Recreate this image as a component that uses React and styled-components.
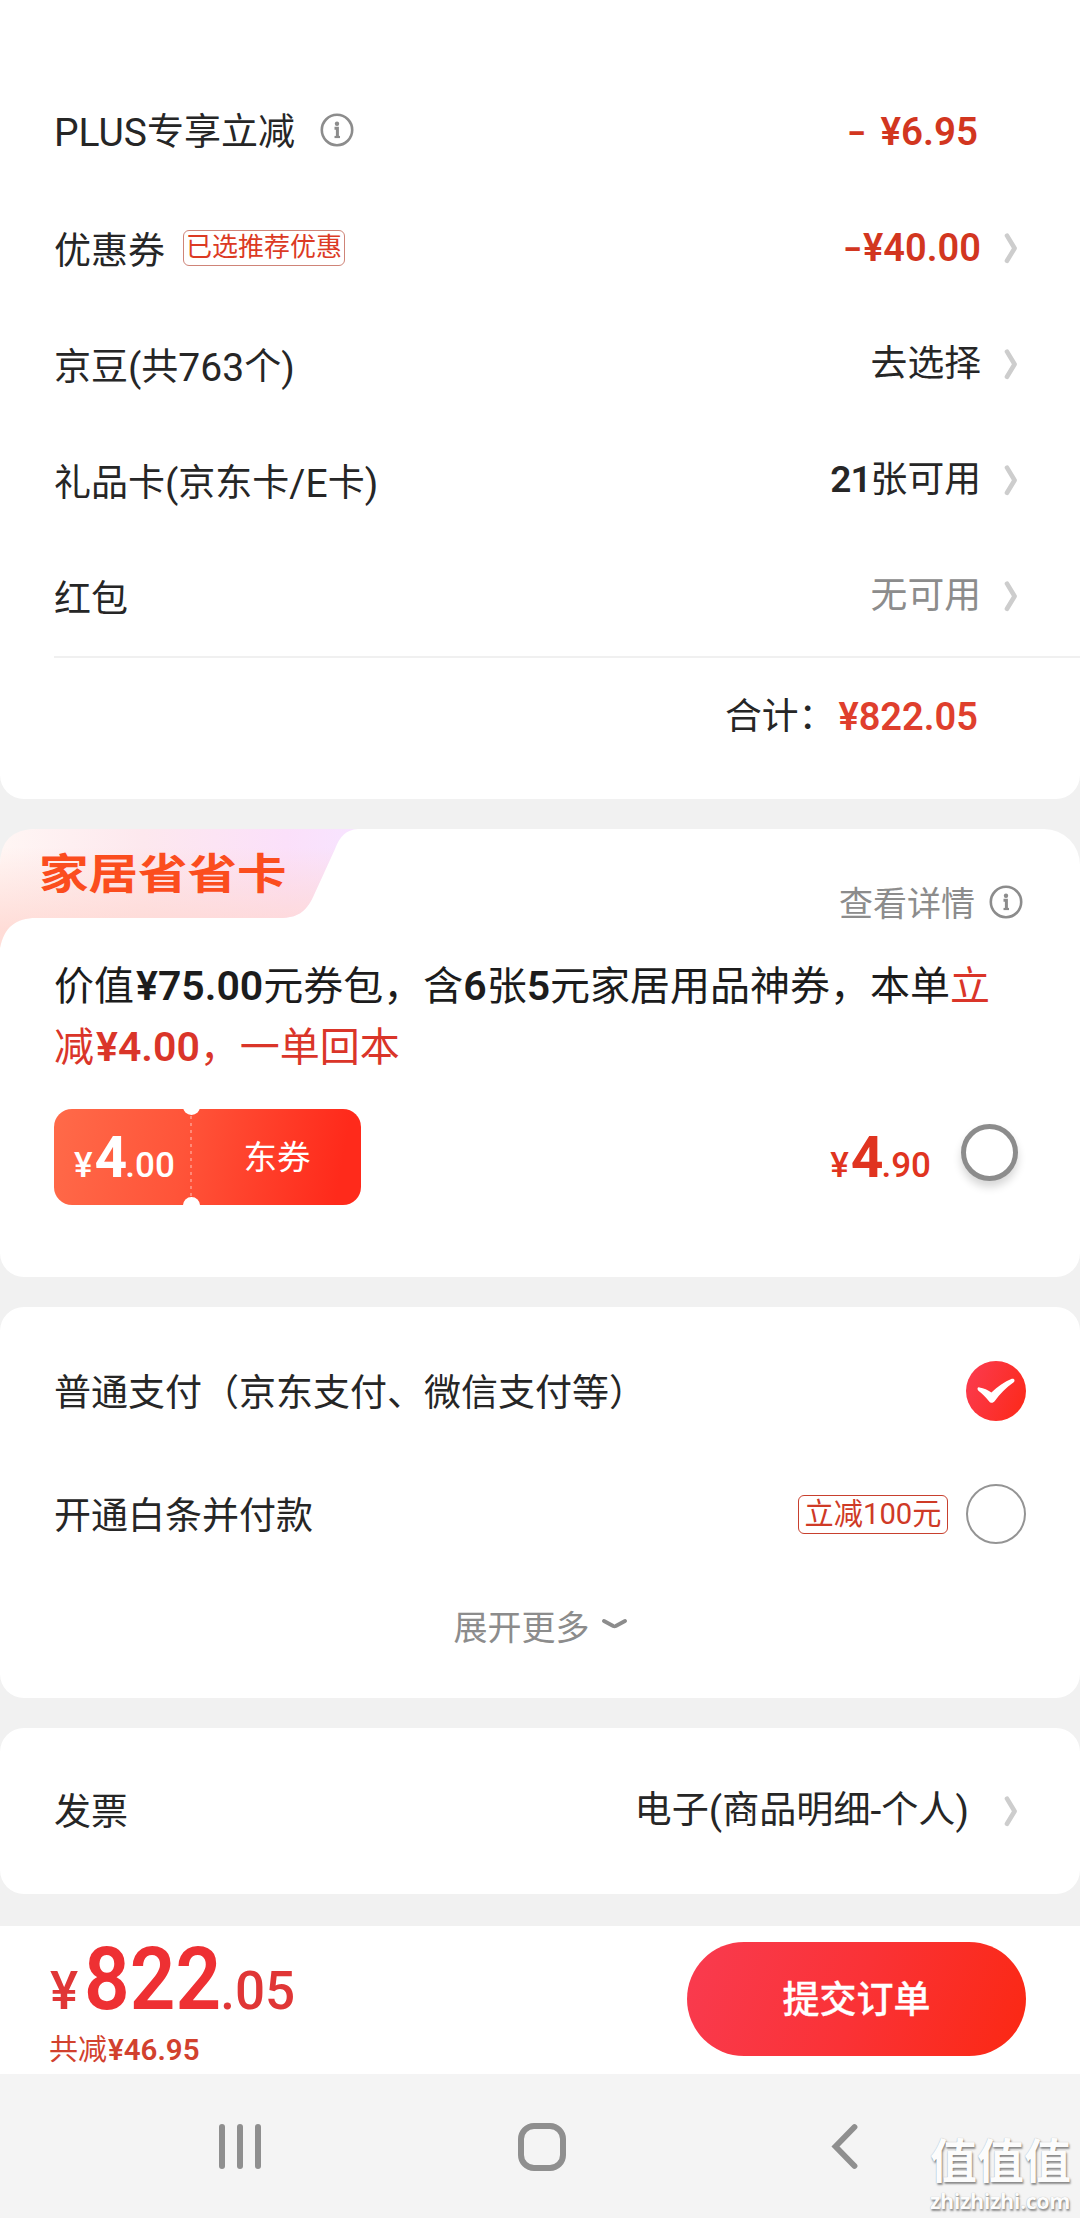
import React from "react";
import styled, { createGlobalStyle } from "styled-components";

const GlobalStyle = createGlobalStyle`
  * {
    box-sizing: border-box;
  }

  body {
    margin: 0;
    background: #f1f1f1;
    color: #262626;
    font-family: Roboto, "Noto Sans CJK SC", sans-serif;
    font-size: 37px;
  }
`;

const Page = styled.div`
  position: relative;
  width: 1080px;
  height: 2218px;
  display: flex;
  flex-direction: column;
  overflow: hidden;
  background: #f1f1f1;
`;

const Card = styled.section`
  height: ${(p) => p.$height}px;
  margin-bottom: ${(p) => p.$gap || 30}px;
  padding: ${(p) => p.$padding || "0"};
  border-radius: ${(p) => p.$radius || "24px"};
  background: #fff;
`;

const Row = styled.div`
  height: ${(p) => p.$height || 116}px;
  padding: 0 54px;
  display: flex;
  align-items: center;
  justify-content: space-between;
`;

const Label = styled.div`
  display: flex;
  align-items: center;
  padding-top: ${(p) => p.$shift || 0}px;
  line-height: 50px;
  white-space: nowrap;

  svg {
    margin: -5px 0 0 25px;
  }
`;

const Value = styled.div`
  display: flex;
  align-items: center;
  padding-right: ${(p) => p.$inset || 8}px;
  font-size: ${(p) => p.$size || 36.8}px;
  line-height: 50px;
  white-space: pre;
  color: ${(p) => (p.$muted ? "#8c8c8c" : "inherit")};

  svg {
    margin-left: ${(p) => p.$arrowGap || 23}px;
  }
`;

const Latin = styled.span`
  font-size: 39px;
`;

const Digits = styled.span`
  margin-left: ${(p) => p.$before || 0}px;
  font-weight: 600;
  font-size: ${(p) => (p.$size ? `${p.$size}px` : "inherit")};
  letter-spacing: ${(p) => p.$tracking || 0}px;
  color: ${(p) => p.$color || "inherit"};
`;

const Minus = styled.span`
  display: inline-block;
  margin-right: ${(p) => p.$after}px;
  color: #d2361f;
  font-weight: 600;
  transform: scaleX(1.45);
`;

const CouponTag = styled.span`
  width: 162px;
  height: 36px;
  margin: -8px 0 0 18px;
  border: 1px solid #cf8478;
  border-radius: 6px;
  color: #dc3a24;
  font-size: 26px;
  line-height: 33px;
  text-align: center;
`;

const OfferTag = styled.span`
  width: 150px;
  height: 39px;
  margin-right: 18px;
  border: 1.5px solid #c8402e;
  border-radius: 6px;
  color: #cf3a26;
  font-size: 29.2px;
  line-height: 37px;
  text-align: center;
`;

const Divider = styled.div`
  height: 2px;
  margin: 2px 0 0 54px;
  background: #f0f0f0;
`;

const CardHeader = styled.header`
  position: relative;
  height: 127px;
  padding: 0 57px 0 39px;
  display: flex;
  align-items: flex-start;
  justify-content: space-between;
`;

const RibbonShape = styled.svg`
  position: absolute;
  top: 0;
  left: 0;
`;

const RibbonTitle = styled.h2`
  position: relative;
  margin: 16px 0 0;
  color: #fb4d1e;
  font-size: 42.5px;
  font-weight: 700;
  line-height: 60px;
  transform: scaleX(1.165);
  transform-origin: left center;
`;

const Detail = styled.div`
  display: flex;
  align-items: center;
  margin-top: 45px;
  color: #8c8c8c;
  font-size: 34px;
  line-height: 60px;

  svg {
    margin: -5px 0 0 14px;
  }
`;

const Promo = styled.p`
  margin: 0;
  padding-left: 54px;
  color: #1c1c1c;
  font-size: 40px;
  line-height: 61px;
  white-space: nowrap;
`;

const PromoRed = styled.span`
  color: #da3529;
`;

const PromoRow = styled.div`
  height: 96px;
  margin: 31px 62px 0 54px;
  display: flex;
  align-items: flex-start;
`;

const Ticket = styled.div`
  position: relative;
  width: 307px;
  height: 96px;
  margin-right: auto;
  display: flex;
  overflow: hidden;
  border-radius: 18px;
  background: linear-gradient(100deg, #ff6a49 0%, #ff5439 42%, #ff2a1b 92%);
  color: #fff;

  &::before,
  &::after {
    content: "";
    position: absolute;
    left: 129px;
    width: 17px;
    height: 17px;
    border-radius: 50%;
    background: #fff;
  }

  &::before {
    top: -11px;
  }

  &::after {
    bottom: -9px;
  }
`;

const TicketAmount = styled.div`
  width: 138px;
  padding-left: 20px;
  background: linear-gradient(rgba(255, 255, 255, 0.32) 50%, transparent 50%)
    right 14px / 2px 7px repeat-y;
`;

const TicketName = styled.div`
  flex: 1;
  padding-left: 1px;
  font-size: 33.5px;
  line-height: 97px;
  text-align: center;
`;

const Price = styled.div`
  height: 96px;
  color: ${(p) => p.$color || "inherit"};
  font-size: 35px;
  font-weight: 500;
  line-height: 114px;
  white-space: nowrap;

  b {
    margin: 0 -1px 0 2px;
    font-size: 57px;
    font-weight: 700;
    line-height: 0;
    letter-spacing: -1px;
  }
`;

const RingRadio = styled.span`
  width: 57px;
  height: 57px;
  margin: 15px 0 0 30px;
  border: 5px solid #8c8c8c;
  border-radius: 50%;
  background: #fff;
  box-shadow: 0 6px 8px rgba(0, 0, 0, 0.16);
`;

const Radio = styled.span`
  width: 60px;
  height: 60px;
  border: 2px solid #949494;
  border-radius: 50%;
`;

const Expand = styled.div`
  height: 100px;
  display: flex;
  align-items: center;
  justify-content: center;
  color: #8c8c8c;
  font-size: 34px;

  svg {
    margin: -2px 0 0 12px;
  }
`;

const SubmitBar = styled.footer`
  height: 148px;
  padding: 16px 54px 0 49px;
  display: flex;
  align-items: flex-start;
  justify-content: space-between;
  background: #fff;
`;

const Total = styled.div`
  padding: 9px 0 0 1px;
  color: #e03636;
  font-size: 53px;
  font-weight: 500;
  line-height: 80px;
  white-space: nowrap;

  b {
    display: inline-block;
    margin: 0 -13px 0 6px;
    color: #ee3033;
    font-size: 87px;
    font-weight: 600;
    line-height: 0;
    transform: scaleX(0.92);
    transform-origin: left center;
  }
`;

const Saved = styled.div`
  color: #d2412e;
  font-size: 29px;
  line-height: 38px;
`;

const SubmitButton = styled.button`
  width: 339px;
  height: 114px;
  padding: 0 0 4px;
  border: 0;
  border-radius: 57px;
  background: linear-gradient(110deg, #f93a4d 5%, #fa3236 50%, #fb2916 95%);
  color: #fff;
  font-family: inherit;
  font-size: 37px;
  font-weight: 500;
  -webkit-text-stroke: 0.3px #fff;
`;

const NavBar = styled.nav`
  height: 144px;
  padding: 49px 0 0 219px;
  display: flex;
  align-items: flex-start;
  background: #f4f4f4;

  svg:nth-child(2) {
    margin: 0 265px 0 257px;
  }
`;

const Watermark = styled.div`
  position: absolute;
  right: 8px;
  bottom: 5px;
  width: 142px;
  color: #fcfcfc;
  text-shadow: 1px 2px 2px rgba(0, 0, 0, 0.42), 0 0 1px rgba(0, 0, 0, 0.3);
  white-space: nowrap;
`;

const WatermarkName = styled.div`
  font-size: 47px;
  font-weight: 700;
  line-height: 55px;
`;

const WatermarkSite = styled.div`
  font-family: "Open Sans", sans-serif;
  font-size: 21.5px;
  font-weight: 700;
  line-height: 24px;
  letter-spacing: -0.4px;
`;

const Arrow = () => (
  <svg width="15" height="31" viewBox="0 0 15 31" fill="none">
    <path
      d="M3 2.6 L10.6 15.2 L3 27.8"
      stroke="#cdcdcd"
      strokeWidth="4.6"
      strokeLinecap="round"
      strokeLinejoin="round"
    />
  </svg>
);

const InfoIcon = () => (
  <svg width="34" height="34" viewBox="0 0 34 34" fill="none">
    <circle cx="17" cy="17" r="15.2" stroke="#8c8c8c" strokeWidth="2.6" />
    <circle cx="17" cy="10.8" r="2.2" fill="#8c8c8c" />
    <path d="M14.5 15.2 H17.4 V24" stroke="#8c8c8c" strokeWidth="3" />
    <path d="M14.5 24 H20" stroke="#8c8c8c" strokeWidth="2.2" />
  </svg>
);

const CheckedIcon = () => (
  <svg width="60" height="60" viewBox="0 0 60 60">
    <defs>
      <linearGradient id="checked" x1="0" y1="0.3" x2="1" y2="0.7">
        <stop offset="0" stopColor="#fb3a4c" />
        <stop offset="1" stopColor="#fc2a1c" />
      </linearGradient>
    </defs>
    <circle cx="30" cy="30" r="30" fill="url(#checked)" />
    <path
      d="M13.4 26.4 C18 27.2 21.6 28.8 25.4 31.6 C31.6 25.6 38.6 20.8 45.8 17.8 C48.6 17 49.4 20 47.4 21.6 C40 26.6 34 32.8 28.8 40 C27 42.4 24.6 42.4 23 40.2 C19.6 36 16.2 32.6 12.4 29.8 C10.8 28.2 11.4 26 13.4 26.4 Z"
      fill="#fff"
    />
  </svg>
);

const CaretDown = () => (
  <svg width="25" height="12" viewBox="0 0 25 12" fill="none">
    <path
      d="M2 3 L11.2 8 Q12.5 8.6 13.8 8 L23 3"
      stroke="#8c8c8c"
      strokeWidth="3.8"
      strokeLinecap="round"
    />
  </svg>
);

const ribbonPath =
  "M0 36 Q0 0 36 0 H358 C346 1 340 7 335 20 L313 68 C306 83 297 89 280 89 H36 C16 89 4 98 0 119 Z";

const Ribbon = () => (
  <RibbonShape width="360" height="120" viewBox="0 0 360 120">
    <defs>
      <linearGradient id="ribbonBase" x1="0" y1="0" x2="1" y2="0">
        <stop offset="0" stopColor="#fff6f4" />
        <stop offset="0.4" stopColor="#fde8ee" />
        <stop offset="0.8" stopColor="#fbe0fa" />
        <stop offset="1" stopColor="#f7e4ff" />
      </linearGradient>
      <linearGradient id="ribbonGlow" x1="0" y1="0" x2="0" y2="1">
        <stop offset="0.15" stopColor="#ffd8d2" stopOpacity="0" />
        <stop offset="0.85" stopColor="#ffd8d2" stopOpacity="0.85" />
      </linearGradient>
    </defs>
    <path d={ribbonPath} fill="url(#ribbonBase)" />
    <path d={ribbonPath} fill="url(#ribbonGlow)" />
  </RibbonShape>
);

const RecentsIcon = () => (
  <svg width="42" height="47" viewBox="0 0 42 47">
    <rect x="0" y="1" width="6" height="45" rx="3" fill="#8f8f8f" />
    <rect x="18" y="1" width="6" height="45" rx="3" fill="#8f8f8f" />
    <rect x="36" y="1" width="6" height="45" rx="3" fill="#8f8f8f" />
  </svg>
);

const HomeIcon = () => (
  <svg width="48" height="48" viewBox="0 0 48 48" fill="none">
    <rect x="3" y="3" width="42" height="42" rx="13" stroke="#8f8f8f" strokeWidth="6" />
  </svg>
);

const BackIcon = () => (
  <svg width="27" height="47" viewBox="0 0 27 47" fill="none">
    <path
      d="M23.5 4 L4.5 23.5 L23.5 43"
      stroke="#8f8f8f"
      strokeWidth="5.8"
      strokeLinecap="round"
    />
  </svg>
);

const App = () => (
  <Page>
    <GlobalStyle />

    <Card $height={799} $padding="74px 0 0" $radius="0 0 24px 24px">
      <Row>
        <Label $shift={1}>
          <Latin>PLUS</Latin>专享立减
          <InfoIcon />
        </Label>
        <Value $inset={48}>
          <Minus $after={17}>-</Minus>
          <Digits $color="#d2361f" $size={38.5}>¥6.95</Digits>
        </Value>
      </Row>
      <Row>
        <Label $shift={8}>
          优惠券<CouponTag>已选推荐优惠</CouponTag>
        </Label>
        <Value $inset={7}>
          <Minus $after={4}>-</Minus>
          <Digits $color="#d2361f" $size={38}>¥40.00</Digits>
          <Arrow />
        </Value>
      </Row>
      <Row>
        <Label $shift={8}>
          京豆<Latin>(</Latin>共<Latin>763</Latin>个<Latin>)</Latin>
        </Label>
        <Value $inset={7}>
          去选择
          <Arrow />
        </Value>
      </Row>
      <Row>
        <Label $shift={8}>
          礼品卡<Latin>(</Latin>京东卡<Latin>/E</Latin>卡<Latin>)</Latin>
        </Label>
        <Value $inset={7}>
          <Digits $size={37} $tracking={-1}>21</Digits>张可用
          <Arrow />
        </Value>
      </Row>
      <Row>
        <Label $shift={8}>红包</Label>
        <Value $muted $inset={7}>
          无可用
          <Arrow />
        </Value>
      </Row>
      <Divider />
      <Row $height={118}>
        <span />
        <Value $inset={48}>
          合计：
          <Digits $color="#df3f2d" $size={38} $before={3}>¥822.05</Digits>
        </Value>
      </Row>
    </Card>

    <Card $height={448} $radius="36px 36px 24px 24px">
      <CardHeader>
        <Ribbon />
        <RibbonTitle>家居省省卡</RibbonTitle>
        <Detail>
          查看详情
          <InfoIcon />
        </Detail>
      </CardHeader>
      <Promo>
        价值<Digits $size={41} $before={2}>¥75.00</Digits>元券包，含<Digits $size={41}>6</Digits>张
        <Digits $size={41}>5</Digits>元家居用品神券，本单<PromoRed>立</PromoRed>
        <br />
        <PromoRed>
          减<Digits $size={41} $before={2}>¥4.00</Digits>，一单回本
        </PromoRed>
      </Promo>
      <PromoRow>
        <Ticket>
          <TicketAmount>
            <Price>
              ¥<b>4</b>.00
            </Price>
          </TicketAmount>
          <TicketName>东券</TicketName>
        </Ticket>
        <Price $color="#e03420">
          ¥<b>4</b>.90
        </Price>
        <RingRadio />
      </PromoRow>
    </Card>

    <Card $height={391} $padding="22px 0 0">
      <Row $height={124}>
        <Label $shift={6}>普通支付（京东支付、微信支付等）</Label>
        <CheckedIcon />
      </Row>
      <Row $height={122}>
        <Label $shift={6}>开通白条并付款</Label>
        <Label>
          <OfferTag>立减100元</OfferTag>
          <Radio />
        </Label>
      </Row>
      <Expand>
        展开更多
        <CaretDown />
      </Expand>
    </Card>

    <Card $height={166} $gap={32}>
      <Row $height={166}>
        <Label $shift={3}>发票</Label>
        <Value $arrowGap={35} $inset={7} $size={37.1}>
          电子<Latin>(</Latin>商品明细<Latin>-</Latin>个人<Latin>)</Latin>
          <Arrow />
        </Value>
      </Row>
    </Card>

    <SubmitBar>
      <div>
        <Total>
          ¥<b>822</b>.05
        </Total>
        <Saved>
          共减<Digits $size={29.5} $before={1}>¥46.95</Digits>
        </Saved>
      </div>
      <SubmitButton>提交订单</SubmitButton>
    </SubmitBar>

    <NavBar>
      <RecentsIcon />
      <HomeIcon />
      <BackIcon />
    </NavBar>

    <Watermark>
      <WatermarkName>值值值</WatermarkName>
      <WatermarkSite>zhizhizhi.com</WatermarkSite>
    </Watermark>
  </Page>
);

export default App;
